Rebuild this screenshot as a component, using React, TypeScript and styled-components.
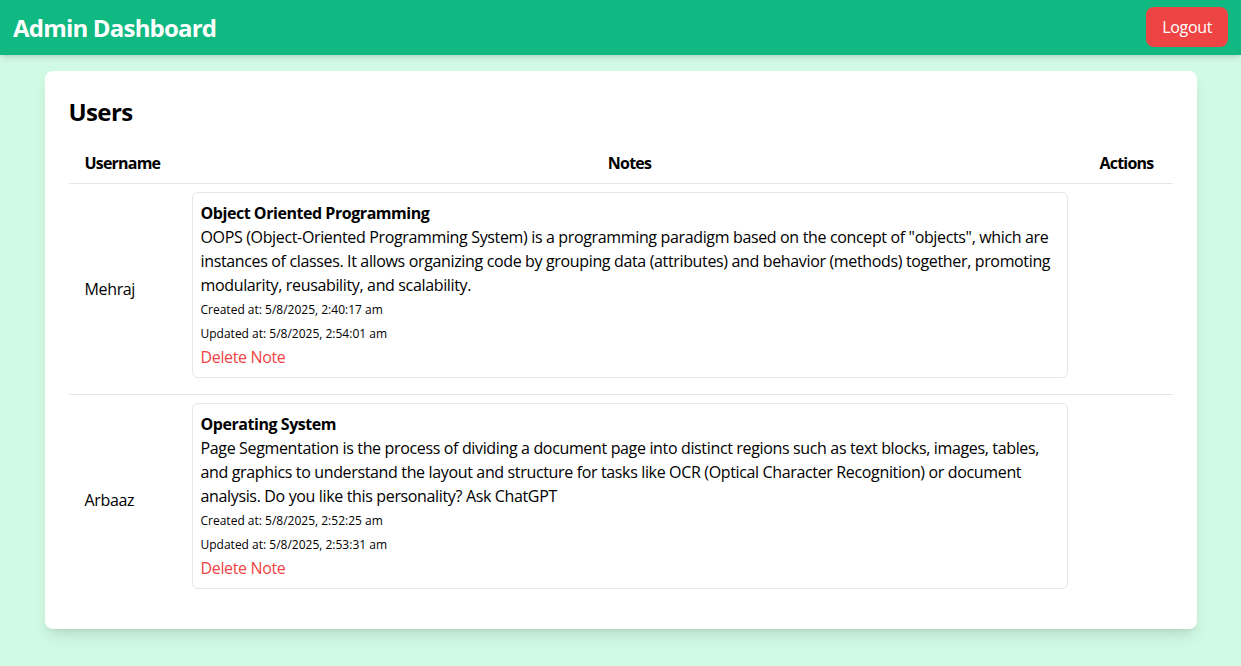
import { FC } from "react";
import styled, { createGlobalStyle } from "styled-components";

type Note = {
  title: string;
  content: string;
  createdAt: string;
  updatedAt: string;
};

type User = {
  id: number;
  username: string;
  notes: Note[];
};

const users: User[] = [
  {
    id: 1,
    username: "Mehraj",
    notes: [
      {
        title: "Object Oriented Programming",
        content:
          'OOPS (Object-Oriented Programming System) is a programming paradigm based on the concept of "objects", which are instances of classes. It allows organizing code by grouping data (attributes) and behavior (methods) together, promoting modularity, reusability, and scalability.',
        createdAt: "5/8/2025, 2:40:17 am",
        updatedAt: "5/8/2025, 2:54:01 am",
      },
    ],
  },
  {
    id: 2,
    username: "Arbaaz",
    notes: [
      {
        title: "Operating System",
        content:
          "Page Segmentation is the process of dividing a document page into distinct regions such as text blocks, images, tables, and graphics to understand the layout and structure for tasks like OCR (Optical Character Recognition) or document analysis. Do you like this personality? Ask ChatGPT",
        createdAt: "5/8/2025, 2:52:25 am",
        updatedAt: "5/8/2025, 2:53:31 am",
      },
    ],
  },
];

const GlobalStyle = createGlobalStyle`
  * {
    box-sizing: border-box;
  }
  body {
    margin: 0;
    background: #d1fae5;
    color: #000;
    font-family: "Open Sans", "Noto Sans", sans-serif;
    letter-spacing: -0.35px;
    min-height: 100vh;
  }
`;

const Header = styled.header`
  height: 55px;
  padding: 0 13px;
  background: #10b981;
  display: flex;
  align-items: center;
  justify-content: space-between;
  box-shadow: 0 4px 6px -1px rgba(0, 0, 0, 0.1), 0 2px 4px -2px rgba(0, 0, 0, 0.1);
  position: relative;
`;

const Title = styled.h1`
  margin: 0;
  font-size: 24px;
  line-height: 32px;
  font-weight: 700;
  letter-spacing: -0.8px;
  color: #fff;
`;

const LogoutButton = styled.button`
  margin-top: -1px;
  height: 40px;
  padding: 0 16px;
  border: none;
  border-radius: 8px;
  background: #ef4444;
  color: #fff;
  font-family: inherit;
  font-size: 16px;
  letter-spacing: inherit;
  cursor: pointer;
`;

const Main = styled.main`
  max-width: 1152px;
  margin: 16px auto 0;
  padding: 24px;
  background: #fff;
  border-radius: 8px;
  box-shadow: 0 10px 15px -3px rgba(0, 0, 0, 0.1), 0 4px 6px -4px rgba(0, 0, 0, 0.1);
`;

const SectionTitle = styled.h2`
  margin: 0 0 16px;
  padding-top: 2px;
  font-size: 24px;
  line-height: 30px;
  font-weight: 700;
  letter-spacing: -0.6px;
`;

const Table = styled.table`
  width: 100%;
  border-collapse: collapse;
  table-layout: fixed;
`;

const HeadCell = styled.th<{ $align?: string }>`
  padding: 8px 16px;
  font-size: 16px;
  line-height: 24px;
  font-weight: 700;
  letter-spacing: -0.8px;
  text-align: ${(p) => p.$align || "left"};
  border-bottom: 1px solid #e5e7eb;
`;

const Row = styled.tr<{ $last?: boolean }>`
  border-bottom: ${(p) => (p.$last ? "none" : "1px solid #e5e7eb")};
`;

const Cell = styled.td`
  padding: 8px 16px;
  font-size: 16px;
  line-height: 24px;
  vertical-align: middle;
`;

const NoteCard = styled.div`
  margin-bottom: 8px;
  padding: 8px;
  border: 1px solid #e5e7eb;
  border-radius: 6px;
`;

const NoteTitle = styled.h3`
  margin: 0;
  font-size: 16px;
  line-height: 24px;
  font-weight: 700;
  letter-spacing: -0.45px;
`;

const NoteText = styled.p`
  margin: 0;
  font-size: 16px;
  line-height: 24px;
`;

const Stamp = styled.p`
  margin: 0;
  padding-top: 2px;
  font-size: 12px;
  line-height: 22px;
  letter-spacing: 0;
`;

const DeleteLink = styled.button`
  display: block;
  padding: 0;
  border: none;
  background: none;
  color: #ef4444;
  font-family: inherit;
  font-size: 16px;
  line-height: 24px;
  letter-spacing: inherit;
  cursor: pointer;
`;

const NoteView: FC<{ note: Note }> = ({ note }) => (
  <NoteCard>
    <NoteTitle>{note.title}</NoteTitle>
    <NoteText>{note.content}</NoteText>
    <Stamp>Created at: {note.createdAt}</Stamp>
    <Stamp>Updated at: {note.updatedAt}</Stamp>
    <DeleteLink>Delete Note</DeleteLink>
  </NoteCard>
);

const App: FC = () => (
  <>
    <GlobalStyle />
    <Header>
      <Title>Admin Dashboard</Title>
      <LogoutButton>Logout</LogoutButton>
    </Header>
    <Main>
      <SectionTitle>Users</SectionTitle>
      <Table>
        <colgroup>
          <col style={{ width: 107 }} />
          <col />
          <col style={{ width: 89 }} />
        </colgroup>
        <thead>
          <tr>
            <HeadCell>Username</HeadCell>
            <HeadCell $align="center">Notes</HeadCell>
            <HeadCell>Actions</HeadCell>
          </tr>
        </thead>
        <tbody>
          {users.map((user, i) => (
            <Row key={user.id} $last={i === users.length - 1}>
              <Cell>{user.username}</Cell>
              <Cell>
                {user.notes.map((note) => (
                  <NoteView key={note.title} note={note} />
                ))}
              </Cell>
              <Cell />
            </Row>
          ))}
        </tbody>
      </Table>
    </Main>
  </>
);

export default App;
